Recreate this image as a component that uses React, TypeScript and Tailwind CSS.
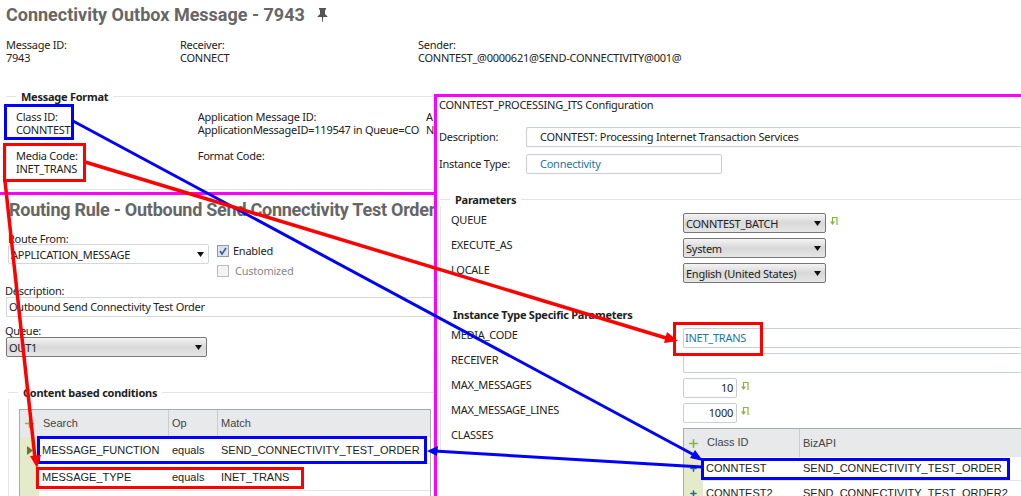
import React from 'react';
import { Plus } from 'lucide-react';

const Arrow = () => (
  <svg width="7" height="5" viewBox="0 0 7 5" className="shrink-0"><path d="M0 0h7L3.5 5z" fill="#111" /></svg>
);

const Select = ({ value, className }: { value: string; className: string }) => (
  <div className={`flex items-center justify-between h-[20px] pl-[2px] pr-[4px] rounded-[2px] border border-[#777] bg-gradient-to-b from-[#f4f4f4] via-[#d8d8d8] to-[#e6e6e6] ${className}`}>
    <span>{value}</span>
    <Arrow />
  </div>
);

const Legend = ({ title, className }: { title: string; className: string }) => (
  <div className={`flex items-center h-[13px] ${className}`}>
    <div className="w-[10px] h-px bg-[#e4e4e4]" />
    <span className="px-[5px] font-bold">{title}</span>
    <div className="flex-1 h-px bg-[#e4e4e4]" />
  </div>
);

const Reset = () => (
  <svg width="10" height="10" viewBox="0 0 10 10" className="mt-[3px] shrink-0">
    <path d="M3.5 7V1.5H8V9" fill="none" stroke="#8db33a" strokeWidth="1.2" />
    <path d="M1 5.5h5L3.5 9z" fill="#8db33a" />
  </svg>
);

const Param = ({ label, children }: { label: string; children: React.ReactNode }) => (
  <div className="flex h-[25px]">
    <span className="w-[242px] pl-[10px]">{label}</span>
    <div className="flex-1 flex gap-[3px] items-start">{children}</div>
  </div>
);

const Input = ({ value, className }: { value?: string; className: string }) => (
  <div className={`h-[20px] border border-[#c9ced6] rounded-[2px] leading-[18px] ${className}`}>{value}</div>
);

export default function App() {
  return (
    <div className="relative w-[1021px] h-[496px] overflow-hidden bg-white text-[#222] text-[11px] leading-[13px] font-['Noto_Sans',sans-serif] tracking-[-0.25px]">
      <div className="h-[88px] pl-[6px] pt-[1px]">
        <div className="flex items-center gap-[10px] h-[26px]">
          <h1 className="text-[#666] text-[18px] font-bold font-['Roboto',sans-serif] tracking-normal">Connectivity Outbox Message - 7943</h1>
          <svg width="13" height="15" viewBox="0 0 13 15" className="ml-[1px]">
            <path d="M3 1h7v1.5L9 3v4l2.5 2.5V10H7.2L6.8 15h-.6L5.8 10H1.5v-.5L4 7V3L3 2.5z" fill="#555" />
          </svg>
        </div>
        <div className="flex mt-[11px]">
          <div className="w-[174px]"><div>Message ID:</div><div>7943</div></div>
          <div className="w-[238px]"><div>Receiver:</div><div>CONNECT</div></div>
          <div><div>Sender:</div><div>CONNTEST_@0000621@SEND-CONNECTIVITY@001@</div></div>
        </div>
      </div>

      <div className="flex h-[408px]">
        <div className="w-[434px] shrink-0 overflow-hidden">
          <div className="h-[104px] pt-[2px]">
            <Legend title="Message Format" className="ml-[6px]" />
            <div className="ml-[6px] h-[87px] border-l border-b border-[#e4e4e4]">
              <div className="flex pl-[9px] pt-[7px]">
                <div className="w-[184px]">
                  <div>Class ID:</div><div>CONNTEST</div>
                  <div className="mt-[13px]">Media Code:</div><div>INET_TRANS</div>
                </div>
                <div className="w-[225px] overflow-hidden whitespace-nowrap">
                  <div>Application Message ID:</div><div>ApplicationMessageID=119547 in Queue=CONN</div>
                  <div className="mt-[13px]">Format Code:</div>
                </div>
                <div className="pl-[6px]"><div>A</div><div>N</div></div>
              </div>
            </div>
          </div>
          <div className="h-[3px] bg-[#ff00ff]" />
          <h2 className="ml-[9px] mt-[3px] h-[24px] leading-[24px] text-[#666] text-[18px] font-bold font-['Roboto',sans-serif] whitespace-nowrap">Routing Rule - Outbound Send Connectivity Test Order</h2>
          <div className="pl-[8px] mt-[10px]">Route From:</div>
          <div className="flex pl-[8px] mt-[-1px] h-[48px]">
            <div className="w-[201px] h-[20px] flex items-center justify-between pl-[2px] pr-[4px] border border-[#d4d8de] rounded-[2px]">
              <span>APPLICATION_MESSAGE</span><Arrow />
            </div>
            <div className="ml-[8px] flex flex-col gap-[7px]">
              <div className="flex items-center gap-[4px] h-[13px]">
                <svg width="12" height="12" viewBox="0 0 12 12"><rect x=".5" y=".5" width="11" height="11" fill="#dde3ee" stroke="#9a9a9a" /><path d="M3 6l2 3 4-6" fill="none" stroke="#3a5a9a" strokeWidth="1.6" /></svg>
                Enabled
              </div>
              <div className="flex items-center gap-[6px] h-[13px] text-[#888]">
                <div className="w-[12px] h-[12px] border border-[#bbb] bg-[#f4f4f4]" />Customized
              </div>
            </div>
          </div>
          <div className="pl-[5px] mt-[-8px]">Description:</div>
          <div className="ml-[6px] h-[20px] border border-[#d4d8de] pl-[2px] leading-[18px] border-r-0">Outbound Send Connectivity Test Order</div>
          <div className="pl-[5px] mt-[7px]">Queue:</div>
          <Select value="OUT1" className="ml-[6px] w-[201px]" />
          <Legend title="Content based conditions" className="ml-[8px] mt-[29px]" />
          <div className="ml-[8px] h-[100px] border-l border-[#e4e4e4] pl-[10px] pt-[10px] font-['Liberation_Sans',sans-serif] tracking-normal">
            <div className="h-[90px] mr-[3px] border border-[#aaa] border-b-0 flex flex-col">
              <div className="flex items-center h-[27px] bg-[#e8e9eb] text-[#444]">
                <div className="w-[19px] flex justify-center"><Plus size={13} strokeWidth={3} className="text-[#8db33a]" /></div>
                <div className="w-[130px] pl-[4px] border-r border-[#ccc] h-full leading-[26px]">Search</div>
                <div className="w-[49px] pl-[3px] border-r border-[#ccc] h-full leading-[26px]">Op</div>
                <div className="pl-[3px]">Match</div>
              </div>
              <div className="flex h-[27px] items-center border-b border-[#e4e4e4]">
                <div className="w-[19px] h-full bg-[#e3ebc9] flex items-center justify-center">
                  <svg width="6" height="9" viewBox="0 0 6 9"><path d="M0 0l6 4.5L0 9z" fill="#5d7a2e" /></svg>
                </div>
                <div className="w-[130px] pl-[3px]">MESSAGE_FUNCTION</div>
                <div className="w-[49px] pl-[3px]">equals</div>
                <div className="pl-[3px] whitespace-nowrap">SEND_CONNECTIVITY_TEST_ORDER</div>
              </div>
              <div className="flex h-[27px] items-center border-b border-[#e4e4e4]">
                <div className="w-[19px] h-full bg-[#e3ebc9]" />
                <div className="w-[130px] pl-[3px]">MESSAGE_TYPE</div>
                <div className="w-[49px] pl-[3px]">equals</div>
                <div className="pl-[3px]">INET_TRANS</div>
              </div>
              <div className="w-[19px] flex-1 bg-[#e3ebc9]" />
            </div>
          </div>
        </div>

        <div className="flex-1 mt-[6px] border-l-[3px] border-t-[3px] border-[#ff00ff] bg-white pl-[2px] overflow-hidden whitespace-nowrap">
          <div className="h-[25px] pt-[1px]">CONNTEST_PROCESSING_ITS Configuration</div>
          <div className="flex items-center h-[27px] mt-[1px]">
            <span className="w-[87px]">Description:</span>
            <Input value="CONNTEST: Processing Internet Transaction Services" className="flex-1 pl-[13px] border-r-0" />
          </div>
          <div className="flex items-center h-[27px]">
            <span className="w-[87px]">Instance Type:</span>
            <Input value="Connectivity" className="w-[196px] pl-[13px] text-[#1b75a8]" />
          </div>
          <Legend title="Parameters" className="ml-[1px] mt-[16px]" />
          <div className="ml-[1px] border-l border-[#e4e4e4] pt-[7px]">
            <Param label="QUEUE">
              <Select value="CONNTEST_BATCH" className="w-[143px]" /><Reset />
            </Param>
            <Param label="EXECUTE_AS"><Select value="System" className="w-[143px]" /></Param>
            <Param label="LOCALE"><Select value="English (United States)" className="w-[143px]" /></Param>
            <div className="h-[20px]" />
            <div className="pl-[12px] h-[13px] font-bold">Instance Type Specific Parameters</div>
            <div className="h-[7px]" />
            <Param label="MEDIA_CODE"><Input value="INET_TRANS" className="flex-1 pl-[1px] text-[#1b75a8] border-r-0" /></Param>
            <Param label="RECEIVER"><Input className="flex-1 border-r-0" /></Param>
            <Param label="MAX_MESSAGES">
              <Input value="10" className="w-[54px] pr-[3px] text-right" /><Reset />
            </Param>
            <Param label="MAX_MESSAGE_LINES">
              <Input value="1000" className="w-[54px] pr-[3px] text-right" /><Reset />
            </Param>
            <Param label="CLASSES">
              <div className="flex-1 h-[76px] border border-[#aaa] border-r-0 font-['Liberation_Sans',sans-serif] tracking-normal">
                <div className="flex items-center h-[28px] bg-[#e8e9eb] text-[#444]">
                  <div className="w-[19px] flex justify-center"><Plus size={13} strokeWidth={3} className="text-[#8db33a]" /></div>
                  <div className="w-[97px] pl-[4px] border-r border-[#ccc] h-full leading-[26px]">Class ID</div>
                  <div className="pl-[3px]">BizAPI</div>
                </div>
                <div className="flex items-center h-[24px] border-b border-[#e4e4e4]">
                  <div className="w-[19px] h-full bg-[#e3ebc9] flex items-center justify-center"><Plus size={9} strokeWidth={4} className="text-[#1b6f80]" /></div>
                  <div className="w-[97px] pl-[3px]">CONNTEST</div>
                  <div className="pl-[3px]">SEND_CONNECTIVITY_TEST_ORDER</div>
                </div>
                <div className="flex items-center h-[24px]">
                  <div className="w-[19px] h-full bg-[#e3ebc9] flex items-center justify-center"><Plus size={9} strokeWidth={4} className="text-[#1b6f80]" /></div>
                  <div className="w-[97px] pl-[3px]">CONNTEST2</div>
                  <div className="pl-[3px]">SEND_CONNECTIVITY_TEST_ORDER2</div>
                </div>
              </div>
            </Param>
          </div>
        </div>
      </div>

      {/* annotations drawn over the screenshot */}
      <div className="absolute left-[4px] top-[104px] w-[70px] h-[36px] border-[3px] border-[#0000ff]" />
      <div className="absolute left-[3px] top-[143px] w-[83px] h-[39px] border-[3px] border-[#ff0000]" />
      <div className="absolute left-[37px] top-[436px] w-[390px] h-[28px] border-[3px] border-[#0000ff]" />
      <div className="absolute left-[36px] top-[467px] w-[268px] h-[22px] border-[3px] border-[#ff0000]" />
      <div className="absolute left-[673px] top-[322px] w-[90px] h-[34px] border-[3px] border-[#ff0000]" />
      <div className="absolute left-[701px] top-[458px] w-[309px] h-[22px] border-[3px] border-[#0000ff]" />
      <svg className="absolute left-0 top-0 pointer-events-none" width="1021" height="496" viewBox="0 0 1021 496">
        <g fill="none">
          <path d="M73 121L696 456" stroke="#0000ff" strokeWidth="3" />
          <path d="M702 467L434 451" stroke="#0000ff" strokeWidth="3" />
          <path d="M85 162L666 338" stroke="#ff0000" strokeWidth="3.5" />
          <path d="M5 181L35 458" stroke="#ff0000" strokeWidth="3.5" />
        </g>
        <path d="M703 461L690 458L695 450z" fill="#0000ff" />
        <path d="M427 451L438 446L437 456z" fill="#0000ff" />
        <path d="M678 341L664 343L667 332z" fill="#ff0000" />
        <path d="M37 468L30 456L41 455z" fill="#ff0000" />
      </svg>
    </div>
  );
}
